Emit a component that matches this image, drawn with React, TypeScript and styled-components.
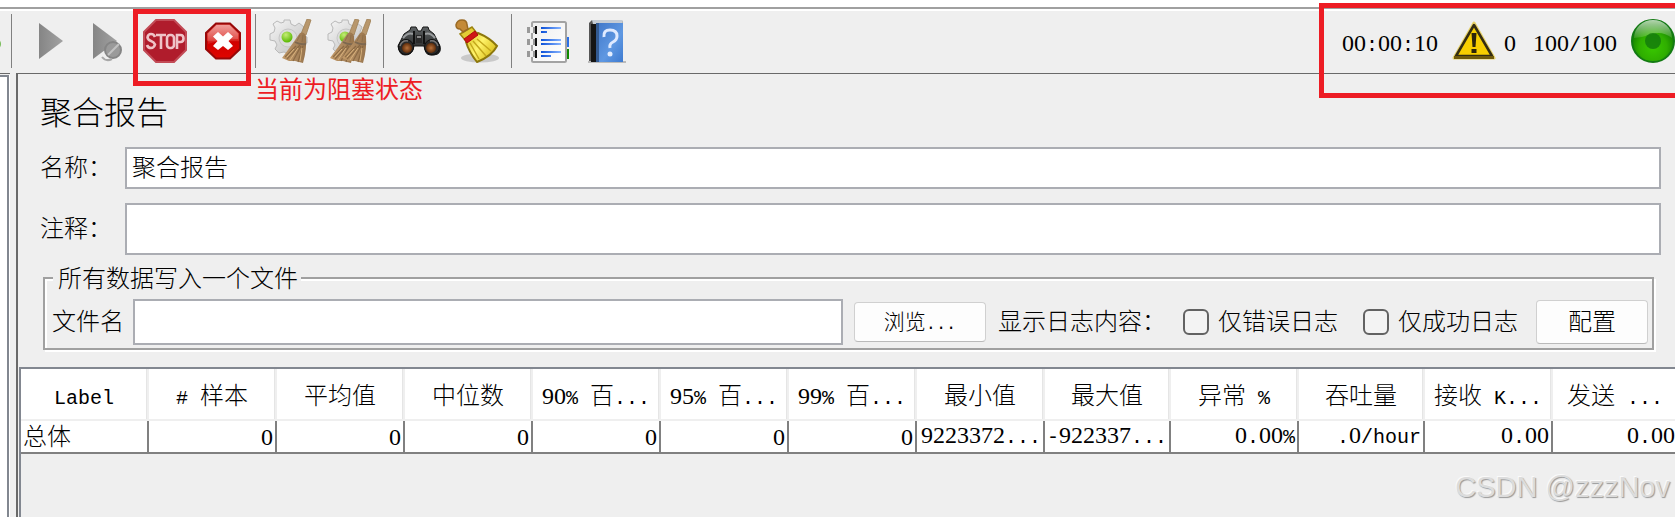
import React from "react";
import styled, { createGlobalStyle, css } from "styled-components";

const cjk = `"Noto Sans CJK SC", sans-serif`;

const GlobalStyle = createGlobalStyle`
  * { box-sizing: border-box; }
  body { margin: 0; background: #efefef; }
  body, input, button {
    font-family: ${cjk};
    font-size: 24px;
    font-weight: 300;
    line-height: 30px;
    color: #000;
  }
`;

const Page = styled.div`
  position: relative;
  display: flex;
  flex-direction: column;
  min-height: 100vh;
  overflow: hidden;
  background: #efefef;
`;

const MenuEdge = styled.div`
  height: 7px;
  background: #fff;
`;

const Toolbar = styled.header`
  display: flex;
  align-items: center;
  height: 66px;
  border-top: 2px solid #a0a0a0;
  box-shadow: inset 0 2px 0 #fff;
`;

const ToolGroup = styled.div<{ $first?: boolean }>`
  display: flex;
  gap: 14px;
  padding: ${(p) => (p.$first ? "0 10px 0 15px" : "0 12px 0 13px")};
`;

const Overflowed = styled.div`
  display: flex;
  justify-content: flex-end;
  width: 11px;
  padding-right: 10px;
  overflow: hidden;
`;

const Separator = styled.div`
  width: 1px;
  height: 54px;
  background: #808080;
`;

const ToolButton = styled.button`
  display: block;
  width: 44px;
  height: 44px;
  padding: 0;
  border: 0;
  background: none;
  svg { display: block; }
`;

const Status = styled.div`
  display: flex;
  align-items: center;
  margin-left: auto;
  gap: 14px;
  svg { display: block; flex: none; }
`;

const Errors = styled.div`
  display: flex;
  align-items: center;
  gap: 8px;
  margin-right: 3px;
`;

const Latin = styled.span<{ $small?: boolean }>`
  font-family: "Liberation Mono", monospace;
  font-size: ${(p) => (p.$small ? 17 : 20)}px;
  font-weight: 400;
  line-height: 20px;
  white-space: pre;
`;

const Digits = styled.span`
  font-family: "Liberation Serif", serif;
  font-size: 24px;
  font-weight: 400;
  line-height: 20px;
`;

const Body = styled.div`
  display: flex;
  flex: 1;
  gap: 6px;
`;

const TreePane = styled.aside`
  display: flex;
  width: 10px;
  padding-top: 1px;
  border-top: 1px solid #696969;
`;

const Tree = styled.div`
  flex: 1;
  margin-right: 1px;
  border: solid #828790;
  border-width: 2px 2px 0 0;
  background: #fff;
  box-shadow: 1px 0 0 #fff;
`;

const ReportPane = styled.main`
  display: flex;
  flex-direction: column;
  flex: 1;
  min-width: 0;
  border: solid #696969;
  border-width: 1px 0 0 2px;
`;

const Title = styled.h1`
  margin: 0;
  padding: 12px 22px 13px;
  font-size: 32px;
  font-weight: 300;
  line-height: 48px;
`;

const Fields = styled.div`
  display: flex;
  flex-direction: column;
  gap: 14px;
  padding: 0 14px 0 22px;
`;

const FieldRow = styled.div`
  display: flex;
  align-items: center;
  label { flex: none; width: 85px; padding-bottom: 4px; }
`;

const TextInput = styled.input<{ $height: number }>`
  flex: 1;
  min-width: 0;
  height: ${(p) => p.$height}px;
  padding: 0 5px 6px;
  border: 2px solid #abadb3;
  border-radius: 0;
  background: #fff;
  outline: none;
`;

const FileBox = styled.fieldset`
  display: flex;
  align-items: center;
  min-width: 0;
  margin: 11px 21px 17px 25px;
  padding: 9px 4px 3px 7px;
  border: 2px solid #a0a0a0;
  box-shadow: 2px 2px 0 #fff, inset 2px 2px 0 #fff;
`;

const Legend = styled.legend`
  margin-left: 1px;
  padding: 0 3px 2px 5px;
  line-height: 22px;
  background: #efefef;
`;

const FileLabel = styled.label`
  margin-right: 9px;
  padding-bottom: 4px;
`;

const Caption = styled.span`
  padding-bottom: 4px;
`;

const PushButton = styled.button<{ $compact?: boolean }>`
  flex: none;
  padding: 0 0 4px;
  border: 1px solid #d0d0d0;
  border-bottom-color: #bababa;
  border-radius: 4px;
  background: #fdfdfd;
  ${(p) =>
    p.$compact
      ? css`
          width: 132px;
          height: 40px;
          margin: 0 12px 0 11px;
          font-size: 21px;
        `
      : css`
          width: 112px;
          height: 44px;
          margin-left: 18px;
        `}
`;

const Check = styled.label`
  display: flex;
  align-items: center;
  gap: 9px;
  margin-left: 17px;
  & + & { margin-left: 25px; }
  input {
    appearance: none;
    width: 26px;
    height: 26px;
    margin: 0;
    border: 2px solid #626262;
    border-radius: 6px;
    background: #f3f3f3;
  }
`;

const TableScroll = styled.div`
  flex: 1;
  margin-left: 1px;
  overflow: hidden;
  border: solid #828790;
  border-width: 2px 0 0 2px;
`;

const Table = styled.table`
  width: 1658px;
  table-layout: fixed;
  border-collapse: separate;
  border-spacing: 0;
  background: #fff;
  white-space: nowrap;
`;

const HeadCell = styled.th<{ $width: number }>`
  width: ${(p) => p.$width}px;
  height: 52px;
  padding: 0;
  border: solid #efefef;
  border-width: 0 2px 2px 0;
  box-shadow: inset -1px 0 0 #e5e5e5;
  font-weight: 300;
  text-align: center;
`;

const Cell = styled.td<{ $left?: boolean }>`
  height: 32px;
  padding: 0 2px 4px;
  border: solid #808080;
  border-width: 0 2px 2px 0;
  line-height: 24px;
  text-align: ${(p) => (p.$left ? "left" : "right")};
`;

const mark = "#ed1c24";

const MarkBox = styled.div<{ $status?: boolean }>`
  position: absolute;
  border: 5px solid ${mark};
  pointer-events: none;
  ${(p) =>
    p.$status
      ? css`
          top: 3px;
          right: -5px;
          width: 361px;
          height: 95px;
        `
      : css`
          top: 9px;
          left: 133px;
          width: 118px;
          height: 77px;
        `}
`;

const MarkText = styled.div`
  position: absolute;
  top: 73px;
  left: 255px;
  font-weight: 400;
  color: ${mark};
`;

const Watermark = styled.div`
  position: absolute;
  right: 5px;
  bottom: 12px;
  font: 400 29px/36px "Liberation Sans", sans-serif;
  color: #dcdcdc;
  text-shadow: 1px 1px 1px #999, -1px -1px 0 #fafafa;
`;

/* Splits a caption into digits, other half-width characters and full-width ones. */
const Mixed = ({ text, small }: { text: string; small?: boolean }) => (
  <>
    {(text.match(/[0-9]+|[\x20-\x2f\x3a-\x7e]+|[^\x20-\x7e]+/g) ?? []).map((run, i) => {
      if (/^[0-9]/.test(run)) return <Digits key={i}>{run}</Digits>;
      if (/^[\x20-\x7e]/.test(run)) return <Latin key={i} $small={small}>{run}</Latin>;
      return run;
    })}
  </>
);

const Svg = ({ children }: { children: React.ReactNode }) => (
  <svg width="44" height="44" viewBox="0 0 44 44" aria-hidden="true">{children}</svg>
);

const HiddenSvg = styled.svg`
  position: absolute;
`;

const Defs = () => (
  <HiddenSvg width="0" height="0" aria-hidden="true">
    <defs>
      <linearGradient id="grey" x1="0" x2="1"><stop offset="0" stopColor="#858585" /><stop offset="1" stopColor="#a2a2a2" /></linearGradient>
      <linearGradient id="red" x1="0" y1="0" x2="0" y2="1"><stop offset="0" stopColor="#e65a54" /><stop offset=".48" stopColor="#da2a24" /><stop offset=".52" stopColor="#d00000" /><stop offset="1" stopColor="#e00600" /></linearGradient>
      <radialGradient id="green" cx=".5" cy=".65" r=".55"><stop offset="0" stopColor="#39c800" /><stop offset=".6" stopColor="#2fae00" /><stop offset="1" stopColor="#138000" /></radialGradient>
      <linearGradient id="shine" x1="0" y1="0" x2="0" y2="1"><stop offset="0" stopColor="#fff" stopOpacity=".85" /><stop offset="1" stopColor="#fff" stopOpacity=".15" /></linearGradient>
      <linearGradient id="gear" x1="0" y1="0" x2="1" y2="1"><stop offset="0" stopColor="#f6f6f6" /><stop offset="1" stopColor="#bdbdbd" /></linearGradient>
      <linearGradient id="straw" x1="0" x2="1"><stop offset="0" stopColor="#c39a68" /><stop offset=".6" stopColor="#a9855c" /><stop offset="1" stopColor="#98744c" /></linearGradient>
      <radialGradient id="dot" cx=".4" cy=".3" r=".7"><stop offset="0" stopColor="#c6ec77" /><stop offset="1" stopColor="#58b800" /></radialGradient>
      <radialGradient id="lens"><stop offset="0" stopColor="#b8713a" /><stop offset="1" stopColor="#5d2c0b" /></radialGradient>
      <linearGradient id="barrel" x1="0" y1="0" x2="0" y2="1"><stop offset="0" stopColor="#5e6264" /><stop offset="1" stopColor="#1c1c1c" /></linearGradient>
      <linearGradient id="yellow" x1="0" x2="1" y2=".6"><stop offset="0" stopColor="#d7bd20" /><stop offset=".5" stopColor="#fff36a" /><stop offset="1" stopColor="#d9bd18" /></linearGradient>
      <linearGradient id="paper" x1="0" y1="0" x2="1" y2="1"><stop offset="0" stopColor="#eee" /><stop offset="1" stopColor="#fff" /></linearGradient>
      <linearGradient id="ink" x1="0" x2="1"><stop offset="0" stopColor="#0b50d8" /><stop offset="1" stopColor="#86b3ff" /></linearGradient>
      <linearGradient id="book" x1="0" y1="0" x2="1" y2="1"><stop offset="0" stopColor="#3f76c8" /><stop offset=".6" stopColor="#5f98e2" /><stop offset="1" stopColor="#3d7ad0" /></linearGradient>
    </defs>
  </HiddenSvg>
);

const PlayIcon = () => <Svg><path d="M12 4L36 22 12 40z" fill="url(#grey)" /></Svg>;

const PlayNoTimersIcon = () => (
  <Svg>
    <path d="M8 4L32 22 8 40z" fill="url(#grey)" />
    <circle cx="28" cy="31" r="8" fill="#9a9a9a" stroke="#858585" strokeWidth="2" />
    <path d="M23 36L34 25" stroke="#c2c2c2" strokeWidth="2" />
    <path d="M17 38q4 5 10 2" fill="none" stroke="#a8a8a8" strokeWidth="2" />
  </Svg>
);

const StopIcon = () => (
  <Svg>
    <path d="M13 1H31L43 13V31L31 43H13L1 31V13z" fill="#b01c2c" stroke="#c24b56" strokeWidth="2" />
    <g fill="none" stroke="#efc3c7" strokeWidth="2.6">
      <path d="M12 18Q11 15 8 15T4.500 18.500Q5 21 8 22T12 25.500Q11 29 8 29T4 26" />
      <path d="M13 16H23M18 16V30" />
      <rect x="24" y="16" width="7" height="13" rx="3" />
      <path d="M34 30V16H37.500Q40.500 16 40.500 19.500T37.500 23H34" />
    </g>
  </Svg>
);

const ShutdownIcon = () => (
  <Svg>
    <path d="M15 4.500H29L39 14V30L29 39.500H15L5 30V14z" fill="url(#red)" stroke="#970808" strokeWidth="2" />
    <path d="M15.500 6H28.500L37 14.500V20Q22 20 7 25V14.500z" fill="url(#shine)" opacity=".5" />
    <path d="M17 13L22 17.500 27 13 32 17.500 27.500 22 32 27 27 31 22 27 17 31 12 27 16.500 22 12 17.500z" fill="#fff" />
  </Svg>
);

const Gear = () => (
  <g>
    <path d="M15 1h6l1 4 4 2 4-3 5 4-2 5 2 4 3 1v6l-4 1-2 5-12 5-5-2-5 1-4-4 2-4-2-4-5-1v-6l4-2 1-4-2-4 4-3 4 2 3-1z" fill="url(#gear)" stroke="#b9b9b9" />
    <circle cx="19" cy="19" r="9" fill="#dcdcdc" stroke="#c6c6c6" />
    <circle cx="18" cy="18" r="5.500" fill="url(#dot)" />
  </g>
);

const Besom = ({ x = 0 }: { x?: number }) => (
  <g transform={`translate(${x} 0)`}>
    <path d="M38 0L42 1 37 16 32 15z" fill="#b8976c" stroke="#a08055" strokeWidth=".8" />
    <path d="M31 14Q35 12 37 17Q38 30 34 44L26 42 20 42 13 39Q22 27 31 14z" fill="url(#straw)" />
    <path d="M31 26L18 40M32 27L24 42M34 27L29 43M27 27L16 38" stroke="#80603c" strokeWidth="1.200" opacity=".75" />
    <path d="M29 29L21 41M33 29L31 42M25 30L18 38" stroke="#d9b27c" strokeWidth="1" />
    <path d="M26 23Q31 26 37 25" fill="none" stroke="#7d6850" strokeWidth="2" />
    <path d="M31 16L28 22M34 16L33 23" stroke="#8f704b" strokeWidth="1" />
  </g>
);

const ClearIcon = () => <Svg><Gear /><Besom /></Svg>;
const ClearAllIcon = () => <Svg><Gear /><Besom x={-10} /><Besom x={2} /></Svg>;

const SearchIcon = () => (
  <Svg>
    <path d="M1 27L7 15 13 11 14 8H19L21 12H24L26 8H31L32 11 37 15 43 27Q45 35 37 36T28 31L27 27H17L16 31Q14 36 8 36T1 27z" fill="url(#barrel)" stroke="#161616" />
    <path d="M6 19Q11 13 16 15M28 15Q33 13 38 19" fill="none" stroke="#999c9e" strokeWidth="2" />
    <path d="M17 12V25M27 12V25" stroke="#111" strokeWidth="2" />
    <path d="M19 16H25V24H19z" fill="#2a2a2a" />
    <path d="M20 18H24" stroke="#8a8a8a" strokeWidth="2" />
    <circle cx="9" cy="28" r="7.500" fill="#2a2a2a" stroke="#101010" />
    <circle cx="35" cy="28" r="7.500" fill="#2a2a2a" stroke="#101010" />
    <path d="M3 27Q5 21 11 22M41 27Q39 21 33 22" fill="none" stroke="#777" strokeWidth="1.500" />
    <circle cx="10" cy="29" r="5" fill="url(#lens)" />
    <circle cx="34" cy="29" r="5" fill="url(#lens)" />
  </Svg>
);

const ResetSearchIcon = () => (
  <Svg>
    <ellipse cx="25" cy="39" rx="19" ry="4.500" fill="#aaa" opacity=".55" />
    <path d="M5 15L17 8 21 13 10 21z" fill="#e3cc35" stroke="#9b8310" strokeWidth="1.500" />
    <path d="M1 6Q2 1 7 1T12 6L13 10 8 13 5 10Q1 10 1 6z" fill="#c48a38" stroke="#9a6a24" strokeWidth="1.500" />
    <path d="M11 23L23 14Q35 19 42 27Q37 37 22 43Q14 33 11 23z" fill="url(#yellow)" stroke="#8d780c" strokeWidth="2" />
    <path d="M15 24L24 40M18 22L31 37M22 20L36 32" stroke="#c4a81c" strokeWidth="1.500" />
    <path d="M9 20L20 12 23 16 12 24z" fill="#d01717" stroke="#b00d0d" />
  </Svg>
);

const FunctionHelperIcon = () => (
  <Svg>
    <path d="M38 18h6v10h-6z" fill="#2b70e8" />
    <path d="M38 30h6v10h-6z" fill="#118a00" />
    <rect x="7" y="3" width="34" height="40" rx="1.500" fill="url(#paper)" stroke="#a3a3a3" strokeWidth="2" />
    {[11, 23, 35].map((y) => (
      <g key={y}>
        <rect x="2" y={y - 3} width="8" height="6" fill="#999" />
        <rect x="5" y={y - 3} width="3" height="6" fill="#eee" />
        <rect x="10" y={y - 4} width="2" height="8" fill="#111" />
      </g>
    ))}
    <path d="M16 8h20v2H16zM16 12h6v2h-6zM16 20h20v2H16zM16 24h20v2H16zM16 32h20v2H16zM16 36h10v2H16z" fill="url(#ink)" />
  </Svg>
);

const HelpIcon = () => (
  <Svg>
    <path d="M5 43H43" stroke="#bbb" strokeWidth="2" />
    <path d="M6 4L9 1H39L40 5V42H6z" fill="#555" />
    <path d="M9 1H39L40 5H10z" fill="#c5ccd4" />
    <rect x="8" y="5" width="6" height="38" fill="#151515" />
    <path d="M13 4H40V43H13z" fill="url(#book)" />
    <path d="M13 4H16V43H13z" fill="#335a91" />
    <path d="M21 18Q20 11 27 11T34 17Q34 21 30 23T27 29" fill="none" stroke="#dfeaff" strokeWidth="3" />
    <circle cx="27" cy="35" r="2.500" fill="#e4eeff" />
  </Svg>
);

const WarningIcon = () => (
  <Svg>
    <path d="M22 4L42 39H2z" fill="#f6d000" stroke="#e8d268" strokeWidth="3" strokeLinejoin="round" />
    <path d="M22 6L40 37H4z" fill="#f7ce00" stroke="#342d12" strokeWidth="2.500" strokeLinejoin="round" />
    <path d="M2 37H42V40H2z" fill="#6f5a0b" />
    <path d="M19.500 14h5l-1 14h-3zM19.500 30h5v4h-5z" fill="#2c250a" />
  </Svg>
);

const RunningIcon = () => (
  <Svg>
    <circle cx="22" cy="22" r="21" fill="url(#green)" stroke="#137a13" strokeWidth="2" />
    <path d="M3 19A19 18 0 0 1 41 19Q31 12 22 15T3 19z" fill="url(#shine)" opacity=".8" />
    <circle cx="22" cy="22" r="8" fill="#147b0c" opacity=".85" />
  </Svg>
);

const ClippedIcon = styled.svg`
  flex: none;
`;

const SaveIcon = () => (
  <ClippedIcon width="44" height="44" viewBox="0 0 44 44" aria-hidden="true">
    <circle cx="38" cy="25" r="6" fill="#79bd5a" />
  </ClippedIcon>
);

const toolGroups = [
  [
    ["启动", PlayIcon],
    ["不停顿开始", PlayNoTimersIcon],
    ["停止", StopIcon],
    ["关闭", ShutdownIcon],
  ],
  [["清除", ClearIcon], ["清除全部", ClearAllIcon]],
  [["查找", SearchIcon], ["重置查找", ResetSearchIcon]],
  [["函数助手", FunctionHelperIcon], ["帮助", HelpIcon]],
] as [string, React.FC][][];

const columns: [string, string, number][] = [
  ["Label", "总体", 128],
  ["# 样本", "0", 128],
  ["平均值", "0", 128],
  ["中位数", "0", 128],
  ["90% 百...", "0", 128],
  ["95% 百...", "0", 128],
  ["99% 百...", "0", 128],
  ["最小值", "9223372...", 128],
  ["最大值", "-922337...", 126],
  ["异常 %", "0.00%", 128],
  ["吞吐量", ".0/hour", 126],
  ["接收 K...", "0.00", 128],
  ["发送 ...", "0.00", 126],
];

export default function App() {
  return (
    <Page>
      <GlobalStyle />
      <Defs />
      <MenuEdge />
      <Toolbar>
        <Overflowed><SaveIcon /></Overflowed>
        {toolGroups.map((group, i) => (
          <React.Fragment key={i}>
            <Separator />
            <ToolGroup $first={i === 0}>
              {group.map(([name, Icon]) => (
                <ToolButton key={name} type="button" aria-label={name}><Icon /></ToolButton>
              ))}
            </ToolGroup>
          </React.Fragment>
        ))}
        <Status>
          <span><Mixed text="00:00:10" /></span>
          <Errors><WarningIcon /><span><Mixed text="0" /></span></Errors>
          <span><Mixed text="100/100" /></span>
          <RunningIcon />
        </Status>
      </Toolbar>
      <Body>
        <TreePane><Tree /></TreePane>
        <ReportPane>
          <Title>聚合报告</Title>
          <Fields>
            <FieldRow>
              <label htmlFor="name">名称：</label>
              <TextInput id="name" $height={42} defaultValue="聚合报告" />
            </FieldRow>
            <FieldRow>
              <label htmlFor="comment">注释：</label>
              <TextInput id="comment" $height={52} />
            </FieldRow>
          </Fields>
          <FileBox>
            <Legend>所有数据写入一个文件</Legend>
            <FileLabel htmlFor="file">文件名</FileLabel>
            <TextInput id="file" $height={46} />
            <PushButton type="button" $compact><Mixed text="浏览..." small /></PushButton>
            <Caption>显示日志内容：</Caption>
            <Check><input type="checkbox" /><Caption>仅错误日志</Caption></Check>
            <Check><input type="checkbox" /><Caption>仅成功日志</Caption></Check>
            <PushButton type="button">配置</PushButton>
          </FileBox>
          <TableScroll>
            <Table>
              <thead>
                <tr>
                  {columns.map(([head, , width]) => (
                    <HeadCell key={head} scope="col" $width={width}><Mixed text={head} /></HeadCell>
                  ))}
                </tr>
              </thead>
              <tbody>
                <tr>
                  {columns.map(([head, value], i) => (
                    <Cell key={head} $left={i === 0}><Mixed text={value} /></Cell>
                  ))}
                </tr>
              </tbody>
            </Table>
          </TableScroll>
        </ReportPane>
      </Body>
      <MarkBox />
      <MarkBox $status />
      <MarkText>当前为阻塞状态</MarkText>
      <Watermark>CSDN @zzzNov</Watermark>
    </Page>
  );
}
